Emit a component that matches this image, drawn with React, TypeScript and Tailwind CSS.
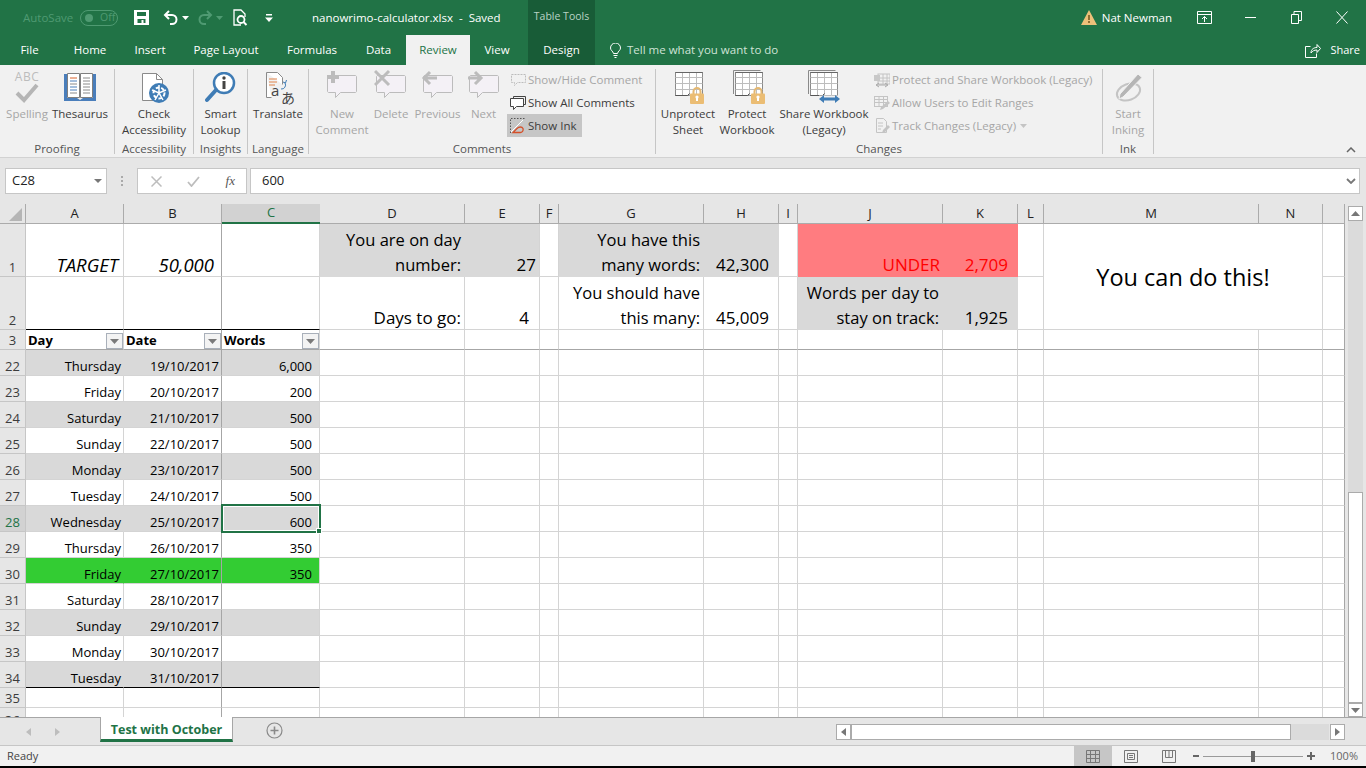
import React from "react";

const days = [
  ["22", "Thursday", "19/10/2017", "6,000"],
  ["23", "Friday", "20/10/2017", "200"],
  ["24", "Saturday", "21/10/2017", "500"],
  ["25", "Sunday", "22/10/2017", "500"],
  ["26", "Monday", "23/10/2017", "500"],
  ["27", "Tuesday", "24/10/2017", "500"],
  ["28", "Wednesday", "25/10/2017", "600"],
  ["29", "Thursday", "26/10/2017", "350"],
  ["30", "Friday", "27/10/2017", "350"],
  ["31", "Saturday", "28/10/2017", ""],
  ["32", "Sunday", "29/10/2017", ""],
  ["33", "Monday", "30/10/2017", ""],
  ["34", "Tuesday", "31/10/2017", ""],
];

const letters = ["A", "B", "C", "D", "E", "F", "G", "H", "I", "J", "K", "L", "M", "N"];

function Lock({ x, y }: { x: number; y: number }) {
  return (
    <g transform={`translate(${x} ${y})`}>
      <path d="M3.5 7V4.5a3.5 3.5 0 0 1 7 0V7" fill="none" stroke="#e5b871" strokeWidth="2" />
      <rect x="0" y="6.5" width="14" height="10.5" rx="1" fill="#ebbd74" />
      <rect x="6" y="9" width="2" height="5" fill="#fff" />
      <circle cx="7" cy="10" r="1.6" fill="#fff" />
    </g>
  );
}

function SheetGrid({ x = 0, stacked = false }: { x?: number; stacked?: boolean }) {
  return (
    <g transform={`translate(${x} 0)`} fill="none" stroke="#8a8a8a" strokeWidth="1">
      {stacked && <path d="M1.5 25V1.5h27" />}
      <rect x="3.5" y="3.5" width="27" height="23" fill="#fff" />
      <path d="M3.5 8.5h27M3.5 14.5h27M3.5 20.5h27M10.5 3.5v23M17.5 3.5v23M24.5 3.5v23" stroke="#bdbdbd" />
      <path d="M3.5 3.5h27" stroke="#666" />
      <path d="M3.5 26.5h12l2-2" stroke="#555" />
    </g>
  );
}

function Bubble({ mark }: { mark: "plus" | "x" | "left" | "right" }) {
  return (
    <svg width="34" height="32" viewBox="0 0 34 32">
      <path d="M3.5 8.5h27a2 2 0 0 1 1 1v15a2 2 0 0 1-1 1h-15l-5 5v-5h-7a2 2 0 0 1-1-1v-15a2 2 0 0 1 1-1z" transform="translate(0 -2)" fill="#f4f1f6" stroke="#bcbcbc" />
      {mark === "plus" && <path d="M8 2v12M2 8h12" stroke="#bcbcbc" strokeWidth="4" />}
      {mark === "x" && <path d="M1 2l14 14M15 2L1 16" stroke="#bcbcbc" strokeWidth="3" />}
      {mark === "left" && <path d="M9 3L3 9l6 6M3 9h13" fill="none" stroke="#bcbcbc" strokeWidth="3" />}
      {mark === "right" && <path d="M8 3l6 6-6 6M14 9H1" fill="none" stroke="#bcbcbc" strokeWidth="3" />}
    </svg>
  );
}

function BigBtn({ w, lines, off, icon }: { w: string; lines: string[]; off?: boolean; icon: React.ReactNode }) {
  return (
    <div className={`${w} flex shrink-0 flex-col items-center ${off ? "text-[#a6a6a6]" : "text-[#3c3c3c]"}`}>
      <div className="flex h-[37px] items-start justify-center">{icon}</div>
      {lines.map((l) => (
        <div key={l} className="whitespace-nowrap leading-[16px]">{l}</div>
      ))}
    </div>
  );
}

function SmallBtn({ label, off, active, icon }: { label: React.ReactNode; off?: boolean; active?: boolean; icon: React.ReactNode }) {
  return (
    <div className={`flex h-[23px] items-center gap-[2px] whitespace-nowrap pl-[3px] pr-[6px] ${off ? "text-[#a6a6a6]" : "text-[#3c3c3c]"} ${active ? "bg-[#c6c6c6]" : ""}`}>
      <span className="flex w-[16px] justify-center">{icon}</span>
      {label}
    </div>
  );
}

function Group({ w, label, children }: { w: string; label: string; children: React.ReactNode }) {
  return (
    <div className={`${w} flex h-[85px] shrink-0 flex-col border-r border-[#c6c6c6]`}>
      <div className="flex h-[74px] shrink-0">{children}</div>
      <div className="text-center leading-[11px] text-[#555]">{label}</div>
    </div>
  );
}

function Cell({ className = "", align = "items-end justify-end", children }: { className?: string; align?: string; children?: React.ReactNode }) {
  return (
    <div className={`relative flex overflow-visible whitespace-nowrap border-r border-b border-[#d4d4d4] leading-[18px] ${align} ${className}`}>
      {children}
    </div>
  );
}

// summary block text, sits a little low in the row like Excel does
function Big({ size = "text-[17px]", children }: { size?: string; children: React.ReactNode }) {
  return <span className={`-mb-[1px] text-right leading-[25px] ${size}`}>{children}</span>;
}

function RowHead({ n, selected }: { n: string; selected?: boolean }) {
  return (
    <div className={`flex items-end justify-center border-r border-b border-[#c6c6c6] leading-[18px] ${selected ? "bg-[#d2d2d2] text-[#217346]" : "bg-[#e6e6e6] text-[#3c3c3c]"}`}>
      {n}
    </div>
  );
}

function FilterBtn() {
  return (
    <span className="absolute right-0 bottom-0 flex h-[16px] w-[17px] items-center justify-center border border-[#a9b0ba] bg-[#f3f3f3]">
      <svg width="9" height="5" viewBox="0 0 9 5"><path d="M0 0h9L4.5 5z" fill="#7a7a7a" /></svg>
    </span>
  );
}

function EmptyCells() {
  return (
    <>
      {letters.slice(3).map((l) => <Cell key={l} />)}
      <Cell className="border-r-[#a6a6a6]" />
    </>
  );
}

function DataRow({ row, index }: { row: string[]; index: number }) {
  const [n, day, date, words] = row;
  const isToday = n === "30";
  const striped = index % 2 === 0 && !isToday;
  const fill = isToday ? "bg-[#33cc33] border-b-[#d4d4d4]" : striped ? "bg-[#d9d9d9]" : "";
  const join = isToday ? "border-r-[#33cc33]" : striped ? "border-r-[#d9d9d9]" : "";
  const closing = n === "34" ? "border-b-black" : "";
  return (
    <>
      <RowHead n={n} selected={n === "28"} />
      <Cell className={`pr-[2px] ${fill} ${join} ${closing}`}>{day}</Cell>
      <Cell className={`border-r-[#a6a6a6] pr-[2px] ${fill} ${closing}`}>{date}</Cell>
      <Cell className={`pr-[7px] ${fill} ${closing}`}>
        {words}
        {n === "28" && (
          <>
            <span className="absolute -top-[2px] -right-[2px] -bottom-[2px] -left-[1px] z-10 border-2 border-[#217346] shadow-[inset_0_0_0_1px_#fff]" />
            <span className="absolute -right-[3px] -bottom-[3px] z-10 h-[6px] w-[6px] border border-white bg-[#217346]" />
          </>
        )}
      </Cell>
      <EmptyCells />
    </>
  );
}

export default function App() {
  return (
    <div className="flex h-[768px] w-[1366px] flex-col overflow-hidden bg-[#e6e6e6] font-['Open_Sans','Noto_Sans',sans-serif] text-[11.5px] text-[#222]">
      {/* title bar + tabs */}
      <div className="flex h-[65px] shrink-0 bg-[#217346] text-white">
        <div className="flex w-[528px] shrink-0 flex-col">
          <div className="flex h-[35px] items-center">
            <span className="ml-[23px] w-[57px] text-[#4f9a72]">AutoSave</span>
            <span className="flex h-[16px] w-[38px] items-center gap-[7px] rounded-full border border-[#4f9a72] pl-[4px] text-[10.5px] text-[#4f9a72]">
              <span className="h-[8px] w-[8px] rounded-full bg-[#4f9a72]" />Off
            </span>
            <svg className="ml-[16px]" width="15" height="15" viewBox="0 0 15 15"><path fillRule="evenodd" d="M0 0h15v15H0zM3 2v4h9V2zM3.5 9v4h8V9zM7.5 10h2v3h-2z" fill="#fff" /></svg>
            <svg className="ml-[14px]" width="16" height="15" viewBox="0 0 16 15"><path d="M6 1L2 5l4 4M2 5h7a4.5 4.5 0 0 1 0 9H7" fill="none" stroke="#fff" strokeWidth="2" /></svg>
            <svg className="ml-[3px]" width="7" height="4" viewBox="0 0 7 4"><path d="M0 0h7L3.5 4z" fill="#fff" /></svg>
            <svg className="ml-[8px]" width="16" height="15" viewBox="0 0 16 15"><path d="M10 1l4 4-4 4M14 5H7a4.5 4.5 0 0 0 0 9h2" fill="none" stroke="#4f9a72" strokeWidth="2" /></svg>
            <svg className="ml-[3px]" width="7" height="4" viewBox="0 0 7 4"><path d="M0 0h7L3.5 4z" fill="#4f9a72" /></svg>
            <svg className="ml-[10px]" width="16" height="17" viewBox="0 0 16 17"><path d="M8 16H1V1h7l4 4v3" fill="none" stroke="#fff" strokeWidth="1.3" /><circle cx="8" cy="10.5" r="3.5" fill="none" stroke="#fff" strokeWidth="1.8" /><path d="M10.5 13l3 3" stroke="#fff" strokeWidth="2" /></svg>
            <svg className="ml-[16px]" width="8" height="8" viewBox="0 0 8 8"><path d="M1 0h6v1.5H1zM0 3.5h8L4 8z" fill="#fff" /></svg>
            <span className="ml-[39px] whitespace-pre">nanowrimo-calculator.xlsx  -  Saved</span>
          </div>
          <div className="flex h-[30px] text-center leading-[30px]">
            <span className="w-[59px]">File</span>
            <span className="w-[62px]">Home</span>
            <span className="w-[58px]">Insert</span>
            <span className="w-[94px]">Page Layout</span>
            <span className="w-[78px]">Formulas</span>
            <span className="w-[55px]">Data</span>
            <span className="w-[64px] bg-[#f1f1f1] text-[#217346]">Review</span>
            <span className="w-[54px]">View</span>
          </div>
        </div>
        <div className="flex w-[67px] shrink-0 flex-col bg-[#185c37] text-center">
          <span className="h-[35px] text-[10.5px] leading-[33px] text-[#b9d3c5]">Table Tools</span>
          <span className="leading-[30px]">Design</span>
        </div>
        <div className="flex flex-1 flex-col">
          <div className="flex h-[35px] items-center justify-end">
            <svg width="16" height="15" viewBox="0 0 16 15"><path d="M8 0l8 15H0z" fill="#edc07a" /><path d="M7.2 5h1.6v5H7.2zM7.2 11h1.6v2H7.2z" fill="#7a5a20" /></svg>
            <span className="mr-[9px] ml-[5px]">Nat Newman</span>
            <span className="flex w-[46px] justify-center"><svg width="15" height="13" viewBox="0 0 15 13"><path d="M.5.5h14v12H.5zM.5 3.5h14M7.5 11V5.5M5 8l2.5-2.5L10 8" fill="none" stroke="#fff" /></svg></span>
            <span className="flex w-[46px] justify-center"><svg width="11" height="1" viewBox="0 0 11 1"><path d="M0 .5h11" stroke="#fff" /></svg></span>
            <span className="flex w-[46px] justify-center"><svg width="11" height="13" viewBox="0 0 11 13"><path d="M.5 3.5h7v9h-7zM3 3.5V.5h7.5v9H7.5" fill="none" stroke="#fff" /></svg></span>
            <span className="mr-[1px] flex w-[46px] justify-center"><svg width="12" height="13" viewBox="0 0 12 13"><path d="M.5.5l11 12M11.5.5l-11 12" stroke="#fff" /></svg></span>
          </div>
          <div className="flex h-[30px] items-center pl-[15px]">
            <svg width="11" height="15" viewBox="0 0 11 15"><path d="M3.5 10.5C3 8 .5 7.5.5 5a5 5 0 0 1 10 0c0 2.5-2.5 3-3 5.500zM3.5 12.5h4M4.5 14.500h2" fill="none" stroke="#fff" /></svg>
            <span className="ml-[6px] text-[#cfe3d7]">Tell me what you want to do</span>
            <svg className="ml-auto" width="16" height="15" viewBox="0 0 16 15"><path d="M5.5 3.5h-5v11h11v-4M6 10c0-4 3-5.5 6-5.5V1.5l3.5 4-3.5 4V7c-3 0-4.5 1-6 3z" fill="none" stroke="#fff" /></svg>
            <span className="mr-[6px] ml-[9px] text-[11px]">Share</span>
          </div>
        </div>
      </div>

      {/* ribbon */}
      <div className="flex h-[93px] shrink-0 border-b border-[#d2d2d2] bg-[#f1f1f1] pt-[4px]">
        <Group w="w-[115px]" label="Proofing">
          <div className="flex pl-[4px]">
            <BigBtn w="w-[46px]" off lines={["Spelling"]} icon={
              <div className="mt-[1px] flex flex-col items-center">
                <span className="text-[12px] leading-[13px] tracking-[0.5px] text-[#bcbcbc]">ABC</span>
                <svg width="24" height="20" viewBox="0 0 24 20"><path d="M2 10l7 7L22 2" fill="none" stroke="#b5b5b5" strokeWidth="4" /></svg>
              </div>
            } />
            <BigBtn w="w-[60px]" lines={["Thesaurus"]} icon={
              <svg className="mt-[4px]" width="32" height="28" viewBox="0 0 32 28">
                <path d="M0 1h3v24h10l3 2 3-2h10V1h3v27H0z" fill="#4a7ebb" />
                <path d="M3.5.5H15.5V24.5H3.5zM16.5.5H28.5V24.5H16.5z" fill="#fff" stroke="#7f7f7f" />
                <path d="M6 5h7" stroke="#d9602a" /><path d="M6 8h7M6 14h7M6 17h7" stroke="#4a7ebb" /><path d="M6 11h7M6 20h7M19 5h7M19 8h7M19 11h7M19 14h7M19 17h7M19 20h7" stroke="#8a8a8a" />
              </svg>
            } />
          </div>
        </Group>
        <Group w="w-[79px]" label="Accessibility">
          <BigBtn w="w-full" lines={["Check", "Accessibility"]} icon={
            <svg className="mt-[4px]" width="32" height="32" viewBox="0 0 32 32">
              <path d="M4.5.5h14l6 6v21h-20z" fill="#fff" stroke="#8a8a8a" /><path d="M18.5.5v6h6" fill="none" stroke="#8a8a8a" />
              <circle cx="21" cy="20" r="10" fill="#3f7cb5" />
              <circle cx="21" cy="20" r="5.5" fill="none" stroke="#fff" strokeWidth="2" strokeDasharray="3.5 2" />
              <path d="M21 12v8M14 17l7 3 7-3M17 27l4-7 4 7" stroke="#fff" strokeWidth="1.5" fill="none" />
            </svg>
          } />
        </Group>
        <Group w="w-[54px]" label="Insights">
          <BigBtn w="w-full" lines={["Smart", "Lookup"]} icon={
            <svg className="mt-[3px]" width="32" height="32" viewBox="0 0 32 32">
              <circle cx="19" cy="11" r="10" fill="#fff" stroke="#3f7cb5" strokeWidth="2.5" />
              <path d="M11 18L2 28" stroke="#3f7cb5" strokeWidth="4" strokeLinecap="round" />
              <path d="M17.5 9h3v8h-3z" fill="#444" /><circle cx="19" cy="6" r="1.7" fill="#444" />
            </svg>
          } />
        </Group>
        <Group w="w-[61px]" label="Language">
          <BigBtn w="w-full" lines={["Translate"]} icon={
            <svg className="mt-[3px] overflow-visible" width="34" height="32" viewBox="0 0 34 32">
              <path d="M5.5.5h11l5 5v7M5.5.5v25h5" fill="#fff" stroke="#8a8a8a" />
              <path d="M8 7h8M8 10h8M8 13h6" stroke="#e0834a" />
              <path d="M20 17a4 4 0 0 0 4-6M22 10l2.5 1 1-3" fill="none" stroke="#3f7cb5" />
              <text x="10" y="24" fontSize="15" fontFamily="Open Sans, sans-serif" fill="#444">a</text>
              <text x="20" y="31" fontSize="14" fontFamily="Noto Sans CJK JP, sans-serif" fill="#444">あ</text>
            </svg>
          } />
        </Group>
        <Group w="w-[347px]" label="Comments">
          <div className="flex w-full pl-[8px]">
            <BigBtn w="w-[50px]" off lines={["New", "Comment"]} icon={<Bubble mark="plus" />} />
            <BigBtn w="w-[48px]" off lines={["Delete"]} icon={<Bubble mark="x" />} />
            <BigBtn w="w-[45px]" off lines={["Previous"]} icon={<Bubble mark="left" />} />
            <BigBtn w="w-[47px]" off lines={["Next"]} icon={<Bubble mark="right" />} />
            <div className="-mt-[1px] flex flex-col items-start">
              <SmallBtn off label="Show/Hide Comment" icon={
                <svg width="15" height="14" viewBox="0 0 15 14"><path d="M.5 1.5h14v8h-8l-3 3v-3h-3z" fill="none" stroke="#bcbcbc" strokeDasharray="2 1" /></svg>
              } />
              <SmallBtn label="Show All Comments" icon={
                <svg width="16" height="14" viewBox="0 0 16 14"><path d="M3.5 2V.5h12v8h-2" fill="none" stroke="#444" /><path d="M.5 2.5h13v8h-7l-3 3v-3h-3z" fill="#fff" stroke="#444" /></svg>
              } />
              <SmallBtn active label="Show Ink" icon={
                <svg width="16" height="16" viewBox="0 0 16 16"><path d="M.5 15V.5H15" fill="none" stroke="#555" strokeDasharray="1.5 1.5" /><path d="M1 14L13 2" stroke="#fff" /><path d="M3 14.5h7a3 3 0 0 0 3-4c-1-2-4-2-6 0z" fill="none" stroke="#d5502a" strokeWidth="1.3" /></svg>
              } />
            </div>
          </div>
        </Group>
        <Group w="w-[447px]" label="Changes">
          <div className="flex w-full pl-[4px]">
            <BigBtn w="w-[56px]" lines={["Unprotect", "Sheet"]} icon={
              <svg width="44" height="36" viewBox="0 0 44 36"><SheetGrid x={6} /><Lock x={24} y={18} /></svg>
            } />
            <BigBtn w="w-[62px]" lines={["Protect", "Workbook"]} icon={
              <svg width="44" height="36" viewBox="0 0 44 36"><SheetGrid x={7} stacked /><Lock x={26} y={18} /></svg>
            } />
            <BigBtn w="w-[92px]" lines={["Share Workbook", "(Legacy)"]} icon={
              <svg width="44" height="36" viewBox="0 0 44 36"><SheetGrid x={5} stacked /><path d="M17 30h21" stroke="#f1f1f1" strokeWidth="7" /><path d="M17 30l5-4v2.5h11V26l5 4-5 4v-2.5H22V34z" fill="#3f7cb5" /></svg>
            } />
            <div className="-mt-[1px] flex flex-col items-start pl-[1px]">
              <SmallBtn off label="Protect and Share Workbook (Legacy)" icon={
                <svg width="16" height="16" viewBox="0 0 16 16"><rect x="4" y="2" width="12" height="10" fill="none" stroke="#c4c4c4" /><path d="M4 6h12M4 9h12M9 2v10M13 2v10" stroke="#c4c4c4" /><rect x="0" y="3" width="6" height="6" fill="#c8c8c8" /><path d="M3 13h10M5 11l-3 2 3 2M11 11l3 2-3 2" fill="none" stroke="#a9a9a9" /></svg>
              } />
              <SmallBtn off label="Allow Users to Edit Ranges" icon={
                <svg width="16" height="16" viewBox="0 0 16 16"><rect x=".5" y="1.5" width="13" height="10" fill="none" stroke="#c4c4c4" /><path d="M.5 4.5h13M.5 7.5h13M5 1.5v10M9.5 1.5v10" stroke="#c4c4c4" /><path d="M6 15l1-3 7-6 2 2-7 6z" fill="#c4c4c4" /></svg>
              } />
              <SmallBtn off label={<span className="flex items-center gap-[4px]">Track Changes (Legacy)<svg width="7" height="4" viewBox="0 0 7 4"><path d="M0 0h7L3.5 4z" fill="#c4c4c4" /></svg></span>} icon={
                <svg width="16" height="16" viewBox="0 0 16 16"><path d="M2.5.5h7l3 3v11h-10z" fill="none" stroke="#c4c4c4" /><path d="M4 5h5M4 8h5M4 11h3" stroke="#c4c4c4" /><path d="M8 15l1-3 5-5 2 2-5 5z" fill="#c4c4c4" /></svg>
              } />
            </div>
          </div>
        </Group>
        <Group w="w-[51px]" label="Ink">
          <BigBtn w="w-full" off lines={["Start", "Inking"]} icon={
            <svg className="mt-[3px]" width="32" height="32" viewBox="0 0 32 32">
              <ellipse cx="16.5" cy="20" rx="12" ry="8" transform="rotate(-20 16.5 20)" fill="none" stroke="#c4c4c4" strokeWidth="2" />
              <path d="M11 25l-4 2 1-5L26 2l4 3.500z" fill="#b5b5b5" stroke="#f1f1f1" />
            </svg>
          } />
        </Group>
        <div className="flex flex-1 items-end justify-end pr-[10px] pb-[4px]">
          <svg width="10" height="6" viewBox="0 0 10 6"><path d="M1 5l4-4 4 4" fill="none" stroke="#666" strokeWidth="1.5" /></svg>
        </div>
      </div>

      {/* formula bar */}
      <div className="flex h-[46px] shrink-0 items-start pt-[10px] pl-[5px] text-[13px]">
        <div className="flex h-[26px] w-[102px] items-center justify-between border border-[#c6c6c6] bg-white pr-[4px] pl-[6px]">
          C28
          <svg width="8" height="4" viewBox="0 0 8 4"><path d="M0 0h8L4 4z" fill="#777" /></svg>
        </div>
        <div className="flex h-[26px] w-[30px] flex-col items-center justify-center gap-[2px]">
          <span className="h-[2px] w-[2px] bg-[#aaa]" /><span className="h-[2px] w-[2px] bg-[#aaa]" /><span className="h-[2px] w-[2px] bg-[#aaa]" />
        </div>
        <div className="flex h-[26px] w-[110px] items-center justify-between border border-[#c6c6c6] bg-white pr-[11px] pl-[13px]">
          <svg width="11" height="11" viewBox="0 0 11 11"><path d="M.5.5l10 10M10.5.5l-10 10" stroke="#bdbdbd" strokeWidth="1.5" /></svg>
          <svg width="13" height="11" viewBox="0 0 13 11"><path d="M1 6l3.5 4L12 1" fill="none" stroke="#bdbdbd" strokeWidth="1.8" /></svg>
          <span className="font-['Liberation_Serif',serif] text-[13px] italic text-[#555]">fx</span>
        </div>
        <div className="ml-[3px] flex h-[26px] w-[1110px] items-center justify-between border border-[#c6c6c6] bg-white pr-[3px] pl-[11px]">
          600
          <svg width="10" height="6" viewBox="0 0 10 6"><path d="M1 1l4 4 4-4" fill="none" stroke="#777" strokeWidth="1.8" /></svg>
        </div>
      </div>

      {/* sheet */}
      <div className="flex h-[513px] shrink-0 text-[13px] text-black">
        <div className="grid h-[513px] w-[1345px] shrink-0 grid-cols-[26px_98px_98px_98px_145px_75px_19px_145px_75px_19px_145px_75px_26px_215px_64px_22px] grid-rows-[20px_53px_53px_20px_repeat(13,26px)_20px_9px] overflow-hidden bg-white">
          {/* column headers */}
          <div className="flex items-end justify-end border-r border-b border-[#ababab] bg-[#e6e6e6] pr-[3px] pb-[2px]">
            <svg width="13" height="13" viewBox="0 0 13 13"><path d="M13 0v13H0z" fill="#b5b5b5" /></svg>
          </div>
          {letters.map((l) => (
            <div key={l} className={l === "C" ? "flex items-center justify-center border-b-2 border-[#217346] bg-[#d2d2d2] text-[#217346]" : "flex items-center justify-center border-r border-b border-[#ababab] bg-[#e6e6e6] text-[#222]"}>{l}</div>
          ))}
          <div className="border-r border-b border-[#ababab] bg-[#e6e6e6]" />

          {/* row 1 */}
          <RowHead n="1" />
          <Cell className="pr-[5px]"><Big size="text-[18.5px] italic">TARGET</Big></Cell>
          <Cell className="border-r-[#a6a6a6] pr-[7px]"><Big size="text-[18.5px] italic">50,000</Big></Cell>
          <Cell />
          <Cell className="border-[#d9d9d9] bg-[#d9d9d9] pr-[3px]"><Big size="text-[16.5px]">You are on day<br />number:</Big></Cell>
          <Cell className="border-b-[#d9d9d9] bg-[#d9d9d9] pr-[3px]"><Big>27</Big></Cell>
          <Cell />
          <Cell className="border-[#d9d9d9] bg-[#d9d9d9] pr-[3px]"><Big size="text-[16.5px]">You have this<br />many words:</Big></Cell>
          <Cell className="border-[#d9d9d9] bg-[#d9d9d9] pr-[9px]"><Big>42,300</Big></Cell>
          <Cell />
          <Cell className="border-[#ff7c80] bg-[#ff7c80] pr-[2px] text-[#ff0000]"><Big>UNDER</Big></Cell>
          <Cell className="border-[#ff7c80] bg-[#ff7c80] pr-[9px] text-[#ff0000]"><Big>2,709</Big></Cell>
          <Cell />
          <Cell align="items-center justify-center" className="col-span-2 row-span-2 text-[23.5px] leading-[32px]">You can do this!</Cell>
          <Cell className="border-r-[#a6a6a6]" />

          {/* row 2 */}
          <RowHead n="2" />
          <Cell className="border-b-black" />
          <Cell className="border-r-[#a6a6a6] border-b-black" />
          <Cell className="border-b-black" />
          <Cell className="pr-[3px]"><Big>Days to go:</Big></Cell>
          <Cell className="pr-[10px]"><Big>4</Big></Cell>
          <Cell />
          <Cell className="pr-[3px]"><Big size="text-[16.5px]">You should have<br />this many:</Big></Cell>
          <Cell className="pr-[9px]"><Big>45,009</Big></Cell>
          <Cell />
          <Cell className="border-[#d9d9d9] bg-[#d9d9d9] pr-[3px]"><Big size="text-[16.5px]">Words per day to<br />stay on track:</Big></Cell>
          <Cell className="border-[#d9d9d9] bg-[#d9d9d9] pr-[9px]"><Big>1,925</Big></Cell>
          <Cell />
          <Cell className="border-r-[#a6a6a6]" />

          {/* row 3 */}
          <RowHead n="3" />
          <Cell align="items-end justify-start" className="border-b-[#a6a6a6] pl-[2px] font-bold">Day<FilterBtn /></Cell>
          <Cell align="items-end justify-start" className="border-r-[#a6a6a6] border-b-[#a6a6a6] pl-[2px] font-bold">Date<FilterBtn /></Cell>
          <Cell align="items-end justify-start" className="border-b-[#a6a6a6] pl-[2px] font-bold">Words<FilterBtn /></Cell>
          {letters.slice(3).map((l) => <Cell key={l} className="border-b-[#a6a6a6]" />)}
          <Cell className="border-r-[#a6a6a6] border-b-[#a6a6a6]" />

          {days.map((row, i) => <DataRow key={row[0]} row={row} index={i} />)}

          {/* rows 35, 36 */}
          <RowHead n="35" />
          <Cell /><Cell className="border-r-[#a6a6a6]" /><Cell />
          <EmptyCells />
          <div className="flex items-start justify-center overflow-hidden border-r border-[#c6c6c6] bg-[#e6e6e6] pt-[3px] leading-[18px] text-[#3c3c3c]">36</div>
          <Cell className="border-b-0" /><Cell className="border-b-0 border-r-[#a6a6a6]" /><Cell className="border-b-0" />
          {letters.slice(3).map((l) => <Cell key={l} className="border-b-0" />)}
          <Cell className="border-b-0 border-r-[#a6a6a6]" />
        </div>

        {/* vertical scrollbar */}
        <div className="flex w-[21px] flex-col pt-[2px] pr-[3px] pl-[3px]">
          <div className="flex h-[15px] shrink-0 items-center justify-center border border-[#ababab] bg-white">
            <svg width="9" height="5" viewBox="0 0 9 5"><path d="M0 5h9L4.5 0z" fill="#777" /></svg>
          </div>
          <div className="h-[271px] shrink-0 bg-[#dbdbdb]" />
          <div className="h-[211px] shrink-0 border border-[#ababab] bg-white" />
          <div className="flex h-[14px] shrink-0 items-center justify-center border border-[#ababab] bg-white">
            <svg width="9" height="5" viewBox="0 0 9 5"><path d="M0 0h9L4.5 5z" fill="#777" /></svg>
          </div>
        </div>
      </div>

      {/* sheet tabs */}
      <div className="flex h-[28px] shrink-0 border-t border-[#a6a6a6]">
        <div className="flex w-[100px] shrink-0 items-center gap-[24px] pl-[26px]">
          <svg width="5" height="8" viewBox="0 0 5 8"><path d="M5 0v8L0 4z" fill="#bdbdbd" /></svg>
          <svg width="5" height="8" viewBox="0 0 5 8"><path d="M0 0v8l5-4z" fill="#bdbdbd" /></svg>
        </div>
        <div className="-mt-[1px] flex h-[25px] w-[133px] shrink-0 items-center justify-center border-x border-b-[3px] border-x-[#a6a6a6] border-b-[#217346] bg-white pt-[5px] text-[12.5px] font-bold text-[#217346]">Test with October</div>
        <div className="flex w-[603px] shrink-0 items-start pt-[4px] pl-[33px]">
          <svg width="17" height="17" viewBox="0 0 17 17"><circle cx="8.5" cy="8.5" r="7.5" fill="none" stroke="#8a8a8a" strokeWidth="1.2" /><path d="M8.5 4.5v8M4.5 8.5h8" stroke="#8a8a8a" strokeWidth="1.6" /></svg>
        </div>
        <div className="mt-[6px] flex h-[16px] items-stretch">
          <div className="flex w-[15px] items-center justify-center border border-[#ababab] bg-white"><svg width="5" height="8" viewBox="0 0 5 8"><path d="M5 0v8L0 4z" fill="#777" /></svg></div>
          <div className="w-[440px] border border-[#ababab] bg-white" />
          <div className="mr-[1px] w-[38px] bg-[#dbdbdb]" />
          <div className="flex w-[15px] items-center justify-center border border-[#ababab] bg-white"><svg width="5" height="8" viewBox="0 0 5 8"><path d="M0 0v8l5-4z" fill="#777" /></svg></div>
        </div>
      </div>

      {/* status bar */}
      <div className="flex h-[21px] shrink-0 items-center border-t border-[#c6c6c6] bg-[#f1f1f1] pl-[7px] text-[#444]">
        <span className="text-[11px]">Ready</span>
        <div className="ml-auto flex h-full items-center">
          <span className="flex h-full w-[38px] items-center justify-center bg-[#c6c6c6]">
            <svg width="14" height="13" viewBox="0 0 14 13"><path d="M.5.5h13v12H.5zM.5 4.5h13M.5 8.5h13M4.5.5v12M9.5.5v12" fill="none" stroke="#777" /></svg>
          </span>
          <span className="flex w-[38px] justify-center">
            <svg width="14" height="13" viewBox="0 0 14 13"><path d="M.5.5h13v12H.5zM3.5 3.5h7v6h-7zM5 5.5h4M5 7.5h4" fill="none" stroke="#777" /></svg>
          </span>
          <span className="flex w-[38px] justify-center">
            <svg width="14" height="13" viewBox="0 0 14 13"><path d="M.5.5h13v12H.5zM3.5.5v7h7v-7M7 .5v7" fill="none" stroke="#777" /></svg>
          </span>
          <span className="ml-[5px] h-[2px] w-[6px] bg-[#666]" />
          <div className="relative mx-[4px] flex h-[12px] w-[100px] items-center">
            <div className="h-px w-full bg-[#9a9a9a]" />
            <span className="absolute left-[48px] h-[11px] w-[4px] bg-[#666]" />
          </div>
          <svg width="8" height="8" viewBox="0 0 8 8"><path d="M4 0v8M0 4h8" stroke="#666" strokeWidth="2" /></svg>
          <span className="mr-[8px] ml-[15px] text-[11px] text-[#666]">100%</span>
        </div>
      </div>
      <div className="h-[2px] shrink-0 bg-black" />
    </div>
  );
}
